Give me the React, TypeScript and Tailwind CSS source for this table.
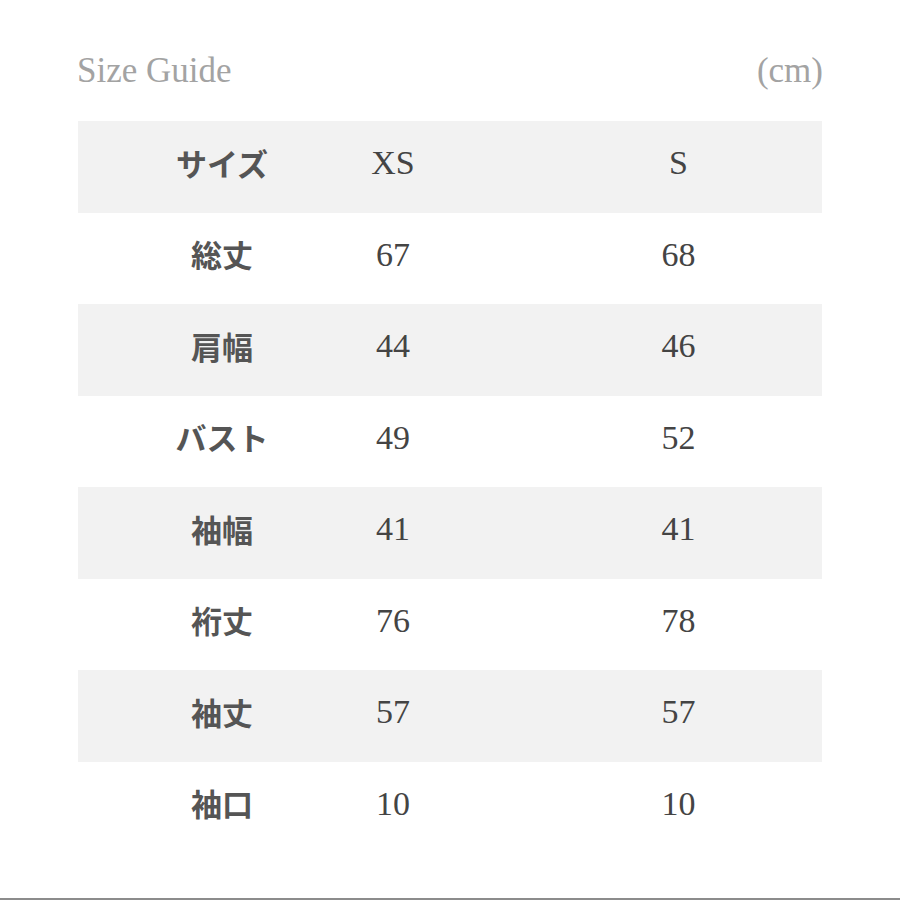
const rows: [string, string, string][] = [
	["サイズ", "XS", "S"],
	["総丈", "67", "68"],
	["肩幅", "44", "46"],
	["バスト", "49", "52"],
	["袖幅", "41", "41"],
	["裄丈", "76", "78"],
	["袖丈", "57", "57"],
	["袖口", "10", "10"],
];

const serif = "font-['Liberation_Serif','DejaVu_Serif',serif]";

export default function App() {
	return (
		<div className="flex h-[900px] w-[900px] flex-col bg-white border-b-2 border-[#8c8c8c]">
			<div className="mx-[77px] mt-[50px] flex items-center justify-between text-[35px] leading-[42px] text-[#a3a3a3]">
				<span className={serif}>Size Guide</span>
				<span className={serif}>(cm)</span>
			</div>

			<div className="mx-[78px] mt-[29px] flex flex-col">
				{rows.map(([label, xs, s], i) => (
					<div
						key={label}
						className={`grid h-[91.5px] grid-cols-[288px_54px_1fr] items-center pb-[8px] text-[#444] ${
							i % 2 === 0 ? "bg-[#f2f2f2]" : "bg-white"
						}`}
					>
						<span className="text-center font-['Noto_Sans_CJK_JP',sans-serif] text-[31px] font-bold text-[#555]">
							{label}
						</span>
						<span className={`text-center text-[34px] whitespace-nowrap ${serif}`}>{xs}</span>
						<span className={`pl-[115px] text-center text-[34px] ${serif}`}>{s}</span>
					</div>
				))}
			</div>
		</div>
	);
}
